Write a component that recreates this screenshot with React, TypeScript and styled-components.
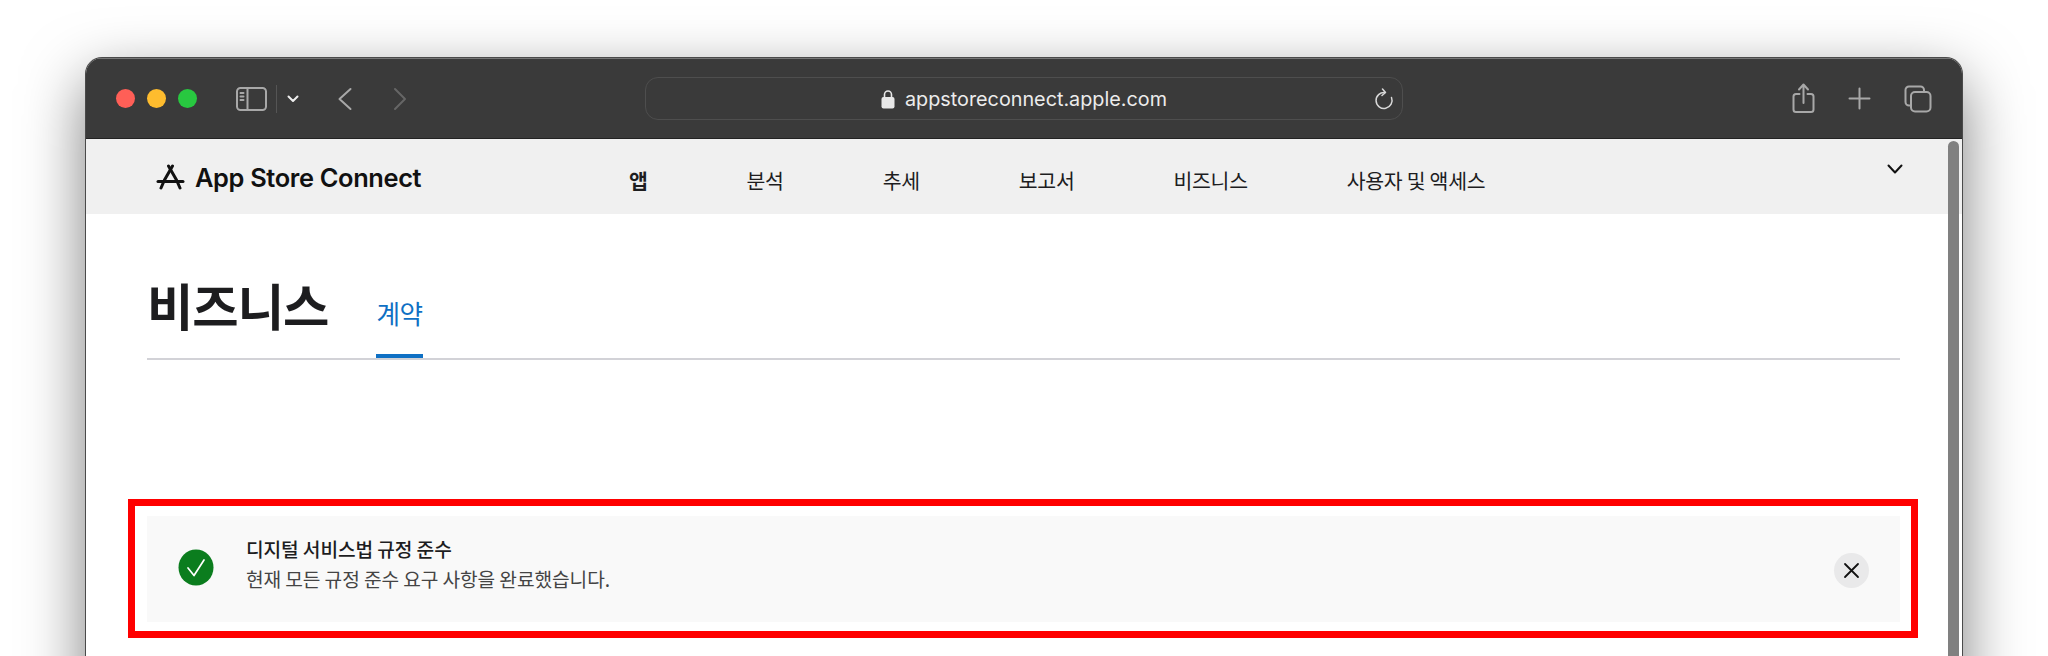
import React from 'react'
import styled, { createGlobalStyle } from 'styled-components'

const Global = createGlobalStyle`
  html, body { margin: 0; height: 656px; overflow: hidden; background: #fff; }
  body { font-family: Inter, "Noto Sans CJK KR", sans-serif; }
`

const Page = styled.div`
  height: 656px;
  overflow: hidden;
  padding: 58px 86px 0;
  box-sizing: border-box;
`

const Window = styled.div`
  position: relative;
  height: 720px;
  background: #fff;
  border-radius: 16px 16px 0 0;
  box-shadow: 0 0 0 1px #4a4a4a, 0 22px 62px rgba(0, 0, 0, 0.52);
  overflow: hidden;
`

const Toolbar = styled.div`
  height: 81px;
  box-sizing: border-box;
  background: #3a3a3a;
  border-top: 1px solid #777;
  border-bottom: 1px solid #222;
  display: flex;
  align-items: center;
  padding: 0 30px;
`

const Light = styled.span<{ $color: string }>`
  width: 19px;
  height: 19px;
  border-radius: 50%;
  background: ${p => p.$color};
  margin-right: 12px;
`

const ToolIcon = styled.svg<{ $left: number; $stroke?: string }>`
  display: block;
  flex: none;
  margin-left: ${p => p.$left}px;
  fill: none;
  stroke: ${p => p.$stroke || '#a8a8a8'};
  stroke-width: 2;
  stroke-linecap: round;
  stroke-linejoin: round;
`

const Divider = styled.span`
  width: 1px;
  height: 28px;
  background: #555;
  margin-left: 9px;
`

const UrlBar = styled.div`
  position: relative;
  flex: none;
  width: 758px;
  height: 43px;
  margin-left: 238px;
  box-sizing: border-box;
  border: 1.5px solid #4e4e4e;
  border-radius: 13px;
  display: flex;
  align-items: center;
  justify-content: center;
  gap: 10px;
  color: #ececec;
  font-family: Inter, sans-serif;
  font-size: 19.8px;
  font-weight: 400;
`

const Reload = styled.svg`
  position: absolute;
  right: 8px;
  top: 10px;
  fill: none;
  stroke: #d8d8d8;
  stroke-width: 1.5;
  stroke-linecap: round;
  stroke-linejoin: round;
`

const ToolGroup = styled.div`
  margin-left: auto;
  display: flex;
  align-items: center;
`

const NavBar = styled.div`
  height: 75px;
  background: #f0f0f0;
  display: flex;
  align-items: center;
  padding-left: 70px;
`

const Brand = styled.div`
  flex: 0 0 473px;
  display: flex;
  align-items: center;
  gap: 10px;
  height: 40px;
  margin-top: 1px;
  font-family: Inter, sans-serif;
  font-size: 25.4px;
  font-weight: 600;
  letter-spacing: -0.35px;
  color: #111;
`

const NavLinks = styled.div`
  display: flex;
  gap: 99px;
  margin-top: 6px;
`

const NavLink = styled.span<{ $active?: boolean }>`
  font-family: "Noto Sans CJK KR", sans-serif;
  font-size: 20.5px;
  font-weight: ${p => (p.$active ? 700 : 400)};
  letter-spacing: -0.3px;
  color: #1d1d1f;
  line-height: 28px;
`

const NavChevron = styled.svg`
  margin-left: auto;
  margin-right: 59px;
  margin-top: -16px;
  fill: none;
  stroke: #111;
  stroke-width: 2;
  stroke-linecap: round;
  stroke-linejoin: round;
`

const Content = styled.main`
  padding: 52px 62px 0 61px;
`

const Header = styled.div`
  display: flex;
  align-items: flex-end;
  height: 92px;
  border-bottom: 2px solid #d2d2d7;
`

const Title = styled.h1`
  margin: 0 48px 20px 0;
  font-family: "Noto Sans CJK KR", sans-serif;
  font-size: 50.4px;
  line-height: 66px;
  font-weight: 700;
  letter-spacing: -1px;
  color: #1d1d1f;
`

const Tab = styled.a`
  box-sizing: border-box;
  height: 67px;
  padding-top: 4px;
  border-bottom: 4px solid #0f70c4;
  font-family: "Noto Sans CJK KR", sans-serif;
  font-size: 25.6px;
  line-height: 36px;
  color: #0f70c4;
  letter-spacing: -0.4px;
`

const Highlight = styled.div`
  margin: 139px -18px 0 -19px;
  padding: 10px 11px 9px 12px;
  border: 7px solid #ff0000;
`

const Alert = styled.div`
  height: 106px;
  box-sizing: border-box;
  background: #f9f9f9;
  display: flex;
  align-items: center;
  padding: 0 31px;
`

const CheckIcon = styled.svg`
  flex: none;
  margin-top: -4px;
`

const AlertText = styled.div`
  margin-left: 32px;
  margin-top: -11px;
  font-family: "Noto Sans CJK KR", sans-serif;
  font-size: 19.2px;
  line-height: 30px;
  letter-spacing: -0.1px;
`

const AlertTitle = styled.div`
  font-weight: 500;
  color: #1d1d1f;
`

const AlertBody = styled.div`
  color: #444;
`

const CloseButton = styled.button`
  margin-left: auto;
  margin-top: 3px;
  width: 35px;
  height: 35px;
  padding: 0;
  border: 0;
  border-radius: 50%;
  background: #e9e9ea;
  display: flex;
  align-items: center;
  justify-content: center;
`

const Scrollbar = styled.div`
  position: absolute;
  top: 83px;
  right: 3px;
  bottom: 0;
  width: 11px;
  border-radius: 6px 6px 0 0;
  background: #808080;
`

const navItems = ['분석', '추세', '보고서', '비즈니스', '사용자 및 액세스']

export default function App() {
  return (
    <>
      <Global />
      <Page>
        <Window>
          <Toolbar>
            <Light $color="#ff5f57" />
            <Light $color="#febc2e" />
            <Light $color="#28c840" />
            <ToolIcon $left={27} width="31" height="24" viewBox="0 0 31 24">
              <rect x="1" y="1" width="29" height="22" rx="3.5" />
              <path d="M11.5 1v22M4.5 6h3M4.5 9.500h3M4.500 13h3" />
            </ToolIcon>
            <Divider />
            <ToolIcon $left={10} $stroke="#eee" width="12" height="8" viewBox="0 0 12 8">
              <path d="M1.500 1.500 6 6l4.500-4.500" />
            </ToolIcon>
            <ToolIcon $left={38} width="16" height="24" viewBox="0 0 16 24">
              <path d="M13.500 2 2.500 12l11 10" />
            </ToolIcon>
            <ToolIcon $left={40} $stroke="#666" width="14" height="24" viewBox="0 0 14 24">
              <path d="m2 2 10 10L2 22" />
            </ToolIcon>
            <UrlBar>
              <svg width="14" height="20" viewBox="0 0 14 20">
                <path d="M3.500 9V5.500a3.500 3.500 0 0 1 7 0V9" fill="none" stroke="#e8e8e8" strokeWidth="1.600" />
                <rect x="0.5" y="8" width="13" height="11.500" rx="2" fill="#e8e8e8" />
              </svg>
              appstoreconnect.apple.com
              <Reload width="20" height="24" viewBox="0 0 20 24">
                <path d="M11 4.500A8 8 0 1 0 17.500 9.500" />
                <path d="M8.500 1 11.500 4.500 8 7.500" />
              </Reload>
            </UrlBar>
            <ToolGroup>
              <ToolIcon $left={0} width="23" height="31" viewBox="0 0 23 31">
                <path d="M7.500 11H4a2.500 2.500 0 0 0-2.500 2.500v13A2.500 2.500 0 0 0 4 29h15a2.500 2.500 0 0 0 2.500-2.500v-13A2.500 2.500 0 0 0 19 11h-3.500" />
                <path d="M11.500 20V2M7 6.500l4.500-5 4.500 5" />
              </ToolIcon>
              <ToolIcon $left={33} width="23" height="23" viewBox="0 0 23 23">
                <path d="M11.500 1.500v20M1.500 11.500h20" />
              </ToolIcon>
              <ToolIcon $left={33} width="28" height="28" viewBox="0 0 28 28">
                <path d="M5.500 20.500H5A3.500 3.500 0 0 1 1.500 17V5A3.500 3.500 0 0 1 5 1.500h11.500A3.500 3.500 0 0 1 20 5v1" />
                <rect x="7" y="7" width="19.500" height="19.500" rx="4" />
              </ToolIcon>
            </ToolGroup>
          </Toolbar>
          <NavBar>
            <Brand>
              <svg width="29" height="27" viewBox="0 0 29 27" fill="none" stroke="#111" strokeWidth="3" strokeLinecap="round">
                <path d="M16.500 2 8.500 16 5 24" />
                <path d="M12.500 2 20.500 16 24 24" />
                <path d="M2 17.500h25" />
              </svg>
              App Store Connect
            </Brand>
            <NavLinks>
              <NavLink $active>앱</NavLink>
              {navItems.map(item => (
                <NavLink key={item}>{item}</NavLink>
              ))}
            </NavLinks>
            <NavChevron width="16" height="10" viewBox="0 0 16 10">
              <path d="m1.500 1.500 6.500 7 6.500-7" />
            </NavChevron>
          </NavBar>
          <Content>
            <Header>
              <Title>비즈니스</Title>
              <Tab>계약</Tab>
            </Header>
            <Highlight>
              <Alert>
                <CheckIcon width="36" height="37" viewBox="0 0 36 37">
                  <ellipse cx="18" cy="18.500" rx="17.500" ry="18" fill="#0b7d1e" />
                  <path d="m10 19 6 7.500L26 11" fill="none" stroke="#fff" strokeWidth="1.700" strokeLinecap="round" strokeLinejoin="round" />
                </CheckIcon>
                <AlertText>
                  <AlertTitle>디지털 서비스법 규정 준수</AlertTitle>
                  <AlertBody>현재 모든 규정 준수 요구 사항을 완료했습니다.</AlertBody>
                </AlertText>
                <CloseButton>
                  <svg width="17" height="17" viewBox="0 0 17 17" fill="none" stroke="#111" strokeWidth="1.800" strokeLinecap="round">
                    <path d="m2 2 13 13M15 2 2 15" />
                  </svg>
                </CloseButton>
              </Alert>
            </Highlight>
          </Content>
          <Scrollbar />
        </Window>
      </Page>
    </>
  )
}
